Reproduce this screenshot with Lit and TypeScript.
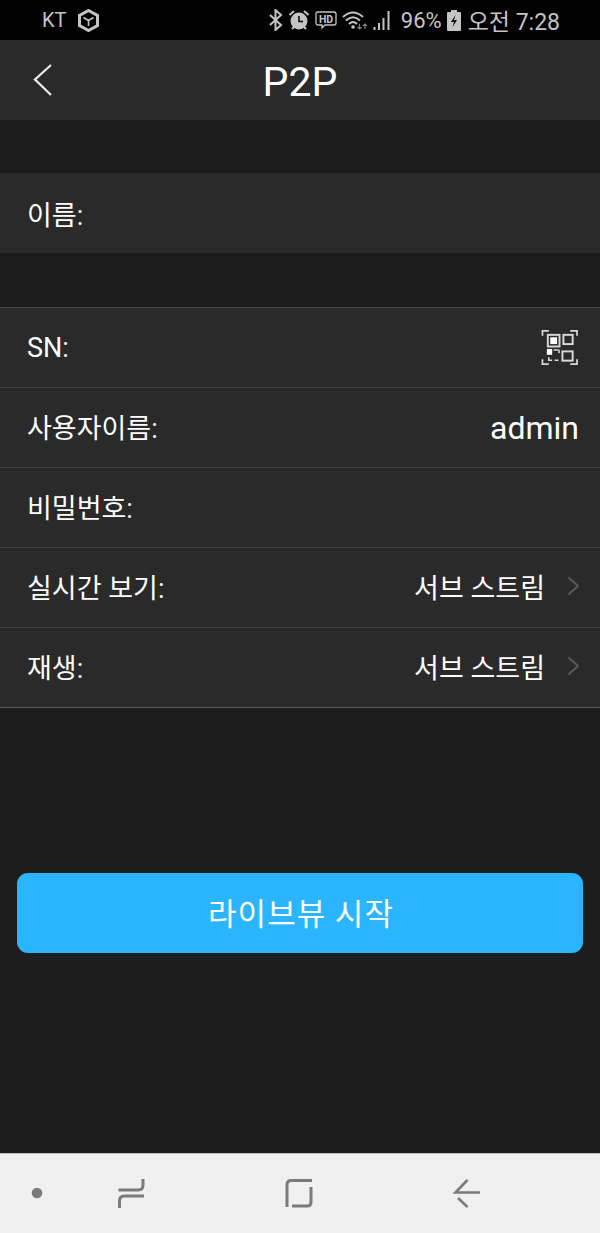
import { LitElement, html, css, svg } from 'lit'
import { customElement } from 'lit/decorators.js'

const chevron = html`<svg class="chev" width="14" height="20" viewBox="0 0 14 20">
  <path d="M3.500 1.500L13 10L3.500 18.500" fill="none" stroke="#585858" stroke-width="2" />
</svg>`

const qr = html`<svg class="qr" width="37" height="37" viewBox="0 0 38 38" fill="none" stroke="#d8d8d8">
  <path d="M1.500 7V2H8M30 2H37V7M1.500 31V36H8M30 36H37V31" stroke-width="1.800" />
  <rect x="7" y="6" width="12" height="12" stroke-width="2" />
  <rect x="9.500" y="8.500" width="7" height="7" fill="#fff" stroke="none" />
  <rect x="23" y="6" width="9.500" height="9.500" stroke-width="2" />
  <rect x="22" y="23" width="10.500" height="9.500" stroke-width="2" />
  <rect x="6" y="20.500" width="5.500" height="6" fill="#fff" stroke="none" />
  <path d="M13 21.500h4.500M18.500 21v4M8 29v3h3.500M14 32h4" stroke-width="1.600" />
</svg>`

@customElement('status-bar')
class StatusBar extends LitElement {
  static styles = css`
    :host {
      display: flex;
      align-items: center;
      height: 40px;
      background: #000;
      color: #c4c4c4;
      font-family: Roboto, 'Noto Sans CJK KR', sans-serif;
      font-size: 23px;
      padding: 0 40px 0 42px;
      box-sizing: border-box;
    }
    .carrier {
      font-size: 20px;
      width: 36px;
    }
    .spacer {
      flex: 1;
    }
    svg {
      display: block;
      flex: none;
    }
    .right {
      display: flex;
      align-items: center;
      gap: 5px;
    }
    .batt {
      font-size: 22px;
      margin-left: 4px;
    }
    .clock {
      margin-left: 2px;
    }
  `
  render() {
    return html`
      <span class="carrier">KT</span>
      <svg width="21" height="23" viewBox="0 0 21 23">
        <path d="M10.500 1.500L19.500 6.500V16.500L10.500 21.500L1.500 16.500V6.500Z" fill="none" stroke="#c4c4c4" stroke-width="3" />
        <path d="M5.500 8.500L10.500 11.500L15.500 8.500M10.500 11.500V17" fill="none" stroke="#c4c4c4" stroke-width="1.600" />
      </svg>
      <span class="spacer"></span>
      <div class="right">
        <svg width="15" height="22" viewBox="0 0 15 22">
          <path d="M2 6l11 10-5.500 5V1L13 6 2 16" fill="none" stroke="#c4c4c4" stroke-width="2" />
        </svg>
        <svg width="22" height="22" viewBox="0 0 22 22">
          <circle cx="11" cy="12" r="8.500" fill="#c4c4c4" />
          <path d="M11 7v5.500h4" fill="none" stroke="#000" stroke-width="1.500" />
          <path d="M1.500 6L6 2M20.500 6L16 2M4 20l2-2M18 20l-2-2" stroke="#c4c4c4" stroke-width="2" />
        </svg>
        <svg width="22" height="20" viewBox="0 0 22 20">
          <path d="M3 2H19Q21 2 21 4V13Q21 15 19 15H10L7 18V15H3Q1 15 1 13V4Q1 2 3 2Z" fill="none" stroke="#c4c4c4" stroke-width="1.300" />
          <text x="11" y="12.500" text-anchor="middle" font-size="10.500" font-weight="700" font-family="Roboto" fill="#c4c4c4">HD</text>
        </svg>
        <svg width="26" height="22" viewBox="0 0 26 22">
          <path d="M1 8Q11 -1 21 8M4 11.500Q11 5 18 11.500M7 15Q11 11 15 15" fill="none" stroke="#c4c4c4" stroke-width="2" />
          <circle cx="11" cy="18" r="1.800" fill="#c4c4c4" />
          <path d="M17.500 15v5M15.500 18l2 2 2-2M23 20v-5M21 17l2-2 2 2" fill="none" stroke="#888" stroke-width="1.100" />
        </svg>
        <svg width="19" height="21" viewBox="0 0 19 21">
          <path d="M1.500 20v-3M6 20v-7M10.500 20V8M15.500 20V1" stroke="#c4c4c4" stroke-width="2" />
        </svg>
        <span class="batt">96%</span>
        <svg width="14" height="21" viewBox="0 0 14 21">
          <path d="M4 0h6v2h3q1 0 1 1v17q0 1-1 1H1q-1 0-1-1V3q0-1 1-1h3z" fill="#c4c4c4" />
          <path d="M8.500 5L4 12h3l-1.500 5L10 10H7z" fill="#000" />
        </svg>
        <span class="clock">오전 7:28</span>
      </div>
    `
  }
}

@customElement('app-root')
class AppRoot extends LitElement {
  static styles = css`
    :host {
      display: flex;
      flex-direction: column;
      height: 1233px;
      background: #1d1d1d;
      font-family: Roboto, 'Noto Sans CJK KR', sans-serif;
      color: #fff;
      overflow: hidden;
    }
    .header {
      height: 80px;
      flex: none;
      box-sizing: border-box;
      padding-top: 3px;
      background: #2a2a2a;
      display: flex;
      align-items: center;
      justify-content: center;
      position: relative;
      font-size: 41px;
    }
    .back {
      position: absolute;
      left: 32px;
      top: 23px;
      display: block;
    }
    .group {
      background: #2a2a2a;
    }
    .first {
      margin-top: 53px;
    }
    .first .row {
      padding-bottom: 0;
    }
    .second {
      margin-top: 54px;
      border-top: 1px solid #454545;
      border-bottom: 1px solid #5a5a5a;
    }
    .row {
      height: 80px;
      box-sizing: border-box;
      display: flex;
      align-items: center;
      justify-content: space-between;
      padding: 0 21px 3px 27px;
      font-size: 27px;
    }
    .second .row + .row {
      border-top: 1px solid #3f3f3f;
    }
    .second .row:first-child {
      height: 79px;
      padding-bottom: 0;
    }
    .value {
      display: flex;
      align-items: center;
      gap: 20px;
    }
    .admin {
      font-size: 32px;
      padding-top: 4px;
    }
    .chev {
      display: block;
    }
    .qr {
      display: block;
      margin-right: 1px;
    }
    .start {
      margin: 165px 17px 0;
      height: 80px;
      flex: none;
      box-sizing: border-box;
      padding: 0 0 3px 2px;
      border-radius: 11px;
      background: #2bb5ff;
      display: flex;
      align-items: center;
      justify-content: center;
      font-size: 31px;
      letter-spacing: 1px;
    }
    .nav {
      margin-top: auto;
      height: 79px;
      flex: none;
      background: #f0f0f0;
      border-top: 1px solid #bbb;
    }
    .nav svg {
      display: block;
    }
  `

  render() {
    return html`
      <status-bar></status-bar>
      <div class="header">
        <svg class="back" width="22" height="34" viewBox="0 0 22 34">
          <path d="M19 2L3 16.500L19 32" fill="none" stroke="#eee" stroke-width="2.200" />
        </svg>
        P2P
      </div>
      <div class="group first">
        <div class="row">이름:</div>
      </div>
      <div class="group second">
        <div class="row"><span>SN:</span>${qr}</div>
        <div class="row"><span>사용자이름:</span><span class="admin">admin</span></div>
        <div class="row"><span>비밀번호:</span></div>
        <div class="row">
          <span>실시간 보기:</span>
          <span class="value">서브 스트림 ${chevron}</span>
        </div>
        <div class="row">
          <span>재생:</span>
          <span class="value">서브 스트림 ${chevron}</span>
        </div>
      </div>
      <div class="start">라이브뷰 시작</div>
      <div class="nav">
        <svg width="600" height="78" viewBox="0 0 600 78">
          ${svg`
            <circle cx="37" cy="39" r="5.300" fill="#7b7b7b" />
            <path d="M118.500 36H138Q143 36 143 31V25M144 42H124Q119.500 42 119.500 47V54" fill="none" stroke="#7b7b7b" stroke-width="3" />
            <path d="M287 53V30.500Q287 26.500 291 26.500H312M311 33V48Q311 52 307 52H292" fill="none" stroke="#7b7b7b" stroke-width="3" />
            <path d="M467.500 26L455.500 38.500H480M458 44L467.500 53" fill="none" stroke="#7b7b7b" stroke-width="2.600" />
          `}
        </svg>
      </div>
    `
  }
}
